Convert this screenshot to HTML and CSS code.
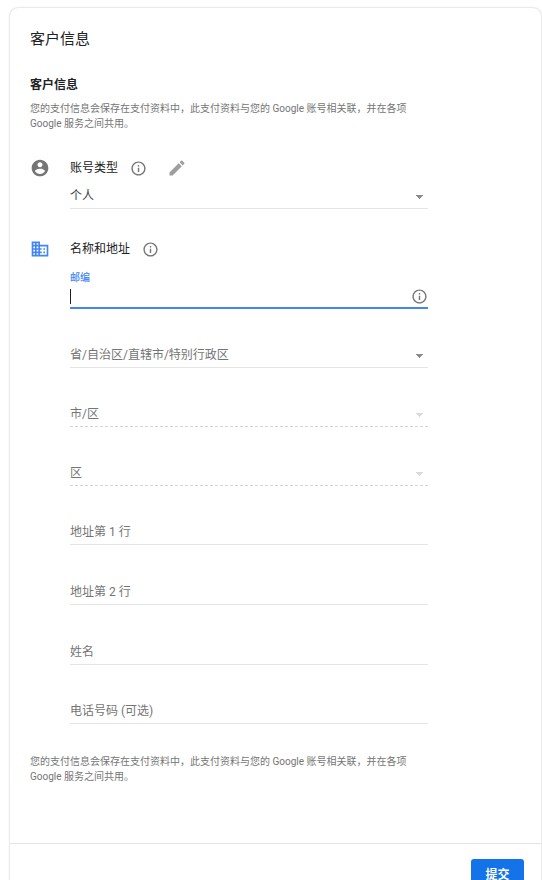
FILE: index.html
```html
<!DOCTYPE html>
<html lang="zh-CN">
<head>
<meta charset="utf-8">
<meta name="viewport" content="width=device-width, initial-scale=1">
<title>客户信息</title>
<link rel="stylesheet" href="styles.css">
</head>
<body>
<svg class="sprite" aria-hidden="true">
  <symbol id="info" viewBox="0 0 24 24"><path d="M11 17h2v-6h-2v6zm1-15C6.480 2 2 6.480 2 12s4.480 10 10 10 10-4.480 10-10S17.520 2 12 2zm0 18c-4.410 0-8-3.590-8-8s3.590-8 8-8 8 3.590 8 8-3.590 8-8 8zM11 9h2V7h-2v2z"/></symbol>
</svg>
<form class="card">
  <div class="content">
    <h1 class="title">客户信息</h1>
    <h2 class="heading">客户信息</h2>
    <p class="note">您的支付信息会保存在支付资料中，此支付资料与您的 Google 账号相关联，并在各项 Google 服务之间共用。</p>

    <section class="section account">
      <svg class="icon" viewBox="0 0 24 24" aria-hidden="true"><path d="M12 2C6.480 2 2 6.480 2 12s4.480 10 10 10 10-4.480 10-10S17.520 2 12 2zm0 3c1.660 0 3 1.340 3 3s-1.340 3-3 3-3-1.340-3-3 1.340-3 3-3zm0 14.200c-2.500 0-4.710-1.280-6-3.220.030-1.990 4-3.080 6-3.080 1.990 0 5.970 1.090 6 3.080-1.290 1.940-3.500 3.220-6 3.220z"/></svg>
      <div class="fields">
        <div class="section-head">
          <label for="type">账号类型</label>
          <button class="icon-button" type="button" aria-label="账号类型说明"><svg class="info"><use href="#info"/></svg></button>
          <button class="icon-button edit" type="button" aria-label="修改"><svg class="icon" viewBox="0 0 24 24"><path d="M3 17.250V21h3.750L17.810 9.940l-3.750-3.750L3 17.250zM20.710 7.040c.390-.390.390-1.020 0-1.410l-2.340-2.340c-.390-.390-1.020-.390-1.410 0l-1.830 1.830 3.750 3.750 1.830-1.830z"/></svg></button>
        </div>
        <div class="control type">
          <select id="type"><option>个人</option></select>
        </div>
      </div>
    </section>

    <section class="section address">
      <svg class="icon active" viewBox="0 0 24 24" aria-hidden="true"><path d="M12 7V3H2v18h20V7H12zM6 19H4v-2h2v2zm0-4H4v-2h2v2zm0-4H4V9h2v2zm0-4H4V5h2v2zm4 12H8v-2h2v2zm0-4H8v-2h2v2zm0-4H8V9h2v2zm0-4H8V5h2v2zm10 12h-8v-2h2v-2h-2v-2h2v-2h-2V9h8v10zm-2-8h-2v2h2v-2zm0 4h-2v2h2v-2z"/></svg>
      <div class="fields">
        <div class="section-head">
          <span>名称和地址</span>
          <button class="icon-button" type="button" aria-label="名称和地址说明"><svg class="info"><use href="#info"/></svg></button>
        </div>
        <label class="float-label" for="zip">邮编</label>
        <div class="control zip">
          <input id="zip" type="text">
          <button class="icon-button" type="button" aria-label="邮编说明"><svg class="info"><use href="#info"/></svg></button>
        </div>
        <div class="control choice"><select aria-label="省/自治区/直辖市/特别行政区"><option>省/自治区/直辖市/特别行政区</option></select></div>
        <div class="control choice disabled"><select aria-label="市/区" disabled><option>市/区</option></select></div>
        <div class="control choice disabled"><select aria-label="区" disabled><option>区</option></select></div>
        <div class="control choice text"><label for="line1">地址第 1 行</label><input id="line1" type="text"></div>
        <div class="control text"><label for="line2">地址第 2 行</label><input id="line2" type="text"></div>
        <div class="control text"><label for="name">姓名</label><input id="name" type="text"></div>
        <div class="control choice text"><label for="phone">电话号码 (可选)</label><input id="phone" type="tel"></div>
      </div>
    </section>

    <p class="note closing">您的支付信息会保存在支付资料中，此支付资料与您的 Google 账号相关联，并在各项 Google 服务之间共用。</p>
  </div>
  <footer class="footer"><button class="submit" type="submit">提交</button></footer>
</form>
</body>
</html>
```

FILE: styles.css
```css
* { box-sizing: border-box; }

body {
  margin: 0;
  padding: 8px 1px 8px 10px;
  background: #fff;
  color: #202124;
  font: 12px/20px Roboto, "Noto Sans CJK SC", sans-serif;
}

h1, h2, p { margin: 0; }

input, select, button {
  font: inherit;
  color: inherit;
  margin: 0;
  padding: 0;
  border: 0;
  background: none;
  outline: none;
}

svg { display: block; fill: currentColor; }
.sprite { position: absolute; width: 0; height: 0; }

.card {
  border-radius: 8px;
  box-shadow: 0 0 2px rgba(0, 0, 0, 0.3);
}

.content {
  max-width: 438px;
  padding: 21px 20px 59px;
}

.title { font-size: 15px; line-height: 20px; font-weight: 400; }
.heading { margin-top: 26px; font-size: 12px; line-height: 20px; font-weight: 700; }
.note { margin-top: 6px; font-size: 10px; line-height: 15px; color: #757575; }
.closing { margin-top: 30px; }

.section { display: flex; }
.account { margin-top: 27px; }
.address { margin-top: 30px; }
.icon { width: 20px; height: 20px; flex: none; color: #757575; }
.icon.active { color: #4285f4; }
.fields { flex: 1; min-width: 0; margin-left: 20px; }
.section-head { display: flex; align-items: center; height: 20px; color: #212121; }
.section-head .icon-button { margin-left: 12px; }
.section-head .edit { margin-left: 20px; }
.info { width: 17px; height: 17px; color: #757575; }
.edit .icon { color: #9e9e9e; }

.control {
  display: flex;
  align-items: flex-end;
  height: 60px;
  border-bottom: 1px solid #e4e4e4;
  color: #757575;
}
.control.type { height: 31px; color: #424242; }
.control.choice { height: 59px; }
.control.disabled { border-bottom: 1px dashed #d6d6d6; }

select, .text input { width: 100%; height: 24px; }
select {
  appearance: none;
  opacity: 1;
  background: conic-gradient(from -45deg at 50% 100%, #8c8c8c 90deg, transparent 0) right 4px top 11px / 9px 4px no-repeat;
}
.disabled select {
  background-image: conic-gradient(from -45deg at 50% 100%, #dadada 90deg, transparent 0);
}

.text { display: grid; align-items: end; }
.text label, .text input { grid-area: 1 / 1; }
.text label { line-height: 24px; }

.float-label {
  display: block;
  margin-top: 12px;
  font-size: 10px;
  line-height: 14px;
  font-weight: 500;
  color: #4285f4;
}
.control.zip {
  align-items: center;
  height: 24px;
  border-bottom: 2px solid #4285f4;
}
.zip input {
  flex: 1;
  min-width: 0;
  height: 15px;
  caret-color: transparent;
  background: linear-gradient(#212121, #212121) left / 1px 100% no-repeat;
}

.footer {
  display: flex;
  justify-content: flex-end;
  padding: 15px 17px;
  border-top: 1px solid #e4e4e4;
}
.submit {
  min-width: 53px;
  height: 32px;
  padding: 0 14px;
  border-radius: 3px;
  background: #1473e8;
  color: #fff;
  font-size: 12px;
  font-weight: 700;
}
```
